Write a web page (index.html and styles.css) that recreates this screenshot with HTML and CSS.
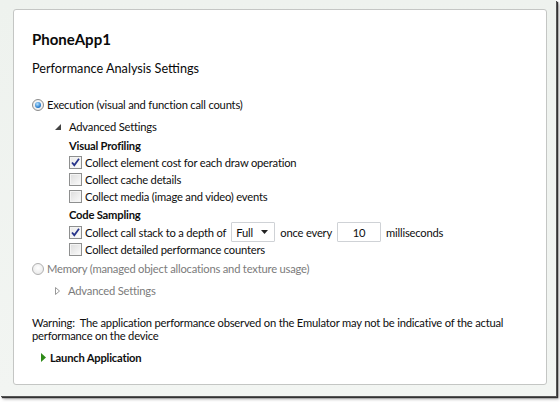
FILE: index.html
```html
<!DOCTYPE html>
<html>
<head>
<meta charset="utf-8">
<link rel="stylesheet" href="styles.css">
</head>
<body>
<div class="frame">
  <div class="card">
    <h1 class="title">PhoneApp1</h1>
    <h2 class="subtitle">Performance Analysis Settings</h2>

    <div class="option">
      <span class="radio checked"></span>
      <span>Execution (visual and function call counts)</span>
    </div>
    <div class="expander">
      <svg class="tri" width="6" height="6" viewBox="0 0 6 6"><polygon points="6,0 6,6 0,6" fill="#444"/></svg>
      <span>Advanced Settings</span>
    </div>
    <div class="group">
      <div class="group-title">Visual Profiling</div>
      <div class="check-row"><span class="check on"><svg width="11" height="11" viewBox="0 0 11 11"><path d="M2 5.5 L4.3 8.2 L9 1.8" fill="none" stroke="#27348b" stroke-width="1.8"/></svg></span><span>Collect element cost for each draw operation</span></div>
      <div class="check-row"><span class="check"></span><span>Collect cache details</span></div>
      <div class="check-row"><span class="check"></span><span>Collect media (image and video) events</span></div>
      <div class="group-title gap">Code Sampling</div>
      <div class="check-row tall"><span class="check on"><svg width="11" height="11" viewBox="0 0 11 11"><path d="M2 5.5 L4.3 8.2 L9 1.8" fill="none" stroke="#27348b" stroke-width="1.8"/></svg></span>
        <span class="inline-fields">
          <span>Collect call stack to a depth of</span>
          <span class="select">Full<svg class="arrow" width="7" height="4" viewBox="0 0 7 4"><polygon points="0,0 7,0 3.5,4" fill="#222"/></svg></span>
          <span>once every</span>
          <span class="textbox">10</span>
          <span>milliseconds</span>
        </span>
      </div>
      <div class="check-row"><span class="check"></span><span>Collect detailed performance counters</span></div>
    </div>

    <div class="option disabled">
      <span class="radio"></span>
      <span>Memory (managed object allocations and texture usage)</span>
    </div>
    <div class="expander disabled">
      <svg class="tri" width="5" height="8" viewBox="0 0 5 8"><polygon points="0.5,0.5 4.5,4 0.5,7.5" fill="#fff" stroke="#999" stroke-width="1"/></svg>
      <span>Advanced Settings</span>
    </div>

    <p class="warning">Warning:&nbsp; The application performance observed on the Emulator may not be indicative of the actual performance on the device</p>

    <div class="launch">
      <svg width="5" height="9" viewBox="0 0 5 9"><polygon points="0,0 5,4.5 0,9" fill="#2e8b18"/></svg>
      <span>Launch Application</span>
    </div>
  </div>
</div>
</body>
</html>
```

FILE: styles.css
```css
html, body {
  margin: 0;
  padding: 0;
  background: #ffffff;
}
body {
  width: 560px;
  height: 402px;
  overflow: hidden;
  font-family: Lato, "Open Sans", sans-serif;
  font-size: 11.2px;
  letter-spacing: -0.2px;
  color: #0e0e0e;
}
.frame {
  width: 556px;
  height: 396px;
  background: linear-gradient(#eef2ee, #f2f5f2);
  box-shadow: 1px 1px 0 #555, 2px 2px 1px #333, 3px 3px 3px rgba(0,0,0,0.35);
  padding: 9px 0 0 13px;
  box-sizing: border-box;
}
.card {
  width: 534px;
  height: 376px;
  box-sizing: border-box;
  background: #fff;
  border: 1px solid #c4c6c4;
  border-radius: 3px;
  padding: 19px 18px 0 18px;
}
.title {
  margin: 0;
  font-size: 15px;
  letter-spacing: 0;
  font-weight: bold;
  line-height: 20px;
  color: #0a0a0a;
}
.subtitle {
  margin: 10px 0 0 0;
  font-size: 12.7px;
  letter-spacing: 0;
  font-weight: normal;
  line-height: 18px;
  color: #0a0a0a;
}
.option {
  display: flex;
  align-items: center;
  gap: 3px;
  margin-top: 19px;
  height: 17px;
}
.option.disabled {
  margin-top: 2px;
  color: #7b7b7b;
}
.radio {
  width: 10px;
  height: 10px;
  border-radius: 50%;
  border: 1px solid #8c8c8c;
  background: radial-gradient(circle at 50% 40%, #ffffff, #e4e4e4);
  position: relative;
  flex: none;
}
.radio.checked::after {
  content: "";
  position: absolute;
  left: 2px;
  top: 2px;
  width: 6px;
  height: 6px;
  border-radius: 50%;
  background: radial-gradient(circle at 40% 35%, #b8e4ff, #1c73c8 70%, #175fa8);
}
.option.disabled .radio {
  border-color: #b0b0b0;
}
.expander {
  display: flex;
  align-items: center;
  gap: 8px;
  margin: 5px 0 0 23px;
  height: 17px;
}
.expander.disabled {
  color: #7b7b7b;
  margin-top: 5px;
}
.tri {
  flex: none;
}
.group {
  margin-left: 37px;
  margin-top: 2px;
}
.group-title {
  font-weight: bold;
  height: 17px;
  line-height: 17px;
}
.group-title.gap {
  margin-top: 1px;
}
.check-row {
  display: flex;
  align-items: center;
  gap: 3px;
  height: 17px;
}
.check-row.tall {
  height: 20px;
  margin: -1px 0 -1px 0;
}
.inline-fields {
  display: flex;
  align-items: center;
  gap: 5px;
}
.check {
  width: 11px;
  height: 11px;
  border: 1px solid #8e8f8f;
  background: linear-gradient(135deg, #dcdcdc, #fbfbfb);
  box-shadow: inset 0 0 0 1px #f4f4f4;
  flex: none;
  display: flex;
  align-items: center;
  justify-content: center;
}
.check.on {
  background: linear-gradient(135deg, #e8e8e8, #ffffff);
}
.select {
  width: 44px;
  height: 20px;
  box-sizing: border-box;
  border: 1px solid #cfd2d6;
  border-radius: 1px;
  display: flex;
  align-items: center;
  justify-content: space-between;
  padding: 0 6px 0 4px;
}
.textbox {
  width: 44px;
  height: 20px;
  box-sizing: border-box;
  border: 1px solid #cfd2d6;
  border-radius: 1px;
  display: flex;
  align-items: center;
  justify-content: center;
}
.warning {
  margin: 17px 0 0 0;
  line-height: 13px;
  width: 490px;
}
.launch {
  display: flex;
  align-items: center;
  gap: 4px;
  margin: 9px 0 0 9px;
  font-weight: bold;
}
```
